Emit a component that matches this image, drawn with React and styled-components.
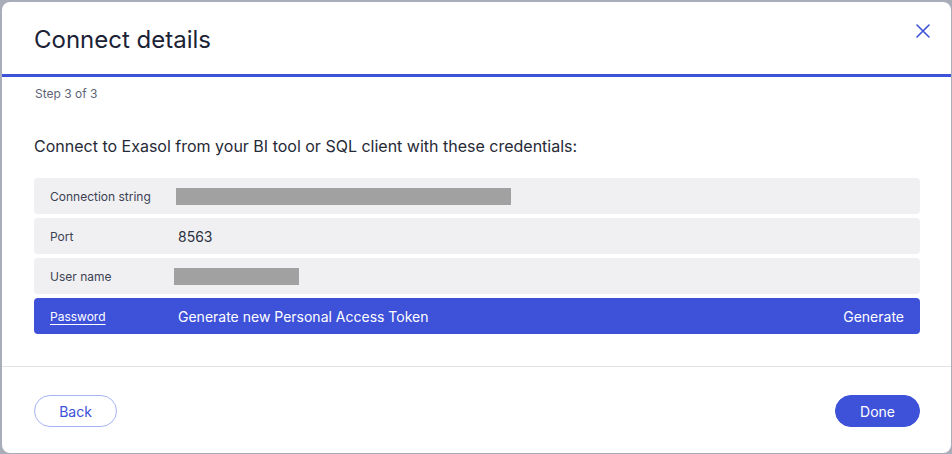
import React from "react";
import styled, { createGlobalStyle } from "styled-components";

const GlobalStyle = createGlobalStyle`
  html, body {
    margin: 0;
    padding: 0;
    background: #a9acb9;
    font-family: Inter, "Noto Sans", sans-serif;
    overflow: hidden;
  }
`;

const rows = [
  { label: "Connection string", masked: 335, shift: -2 },
  { label: "Port", value: "8563" },
  { label: "User name", masked: 125, shift: -4 },
];

function App() {
  return (
    <>
      <GlobalStyle />
      <Modal>
        <Header>
          <Title>Connect details</Title>
          <CloseButton aria-label="Close">
            <svg width="14" height="14" viewBox="0 0 14 14">
              <path d="M1 1L13 13M13 1L1 13" stroke="#3d51d9" strokeWidth="1.6" strokeLinecap="round" />
            </svg>
          </CloseButton>
        </Header>
        <Progress />
        <Step>Step 3 of 3</Step>
        <Body>
          <Intro>Connect to Exasol from your BI tool or SQL client with these credentials:</Intro>
          <List>
            {rows.map((r) => (
              <Row key={r.label}>
                <Label>{r.label}</Label>
                {r.masked ? (
                  <Mask $w={r.masked} $shift={r.shift || 0} />
                ) : (
                  <Value>{r.value}</Value>
                )}
              </Row>
            ))}
            <Row $active>
              <Label $link>Password</Label>
              <Value>Generate new Personal Access Token</Value>
              <Action>Generate</Action>
            </Row>
          </List>
        </Body>
        <Footer>
          <Button>Back</Button>
          <Button $primary>Done</Button>
        </Footer>
      </Modal>
    </>
  );
}

const Modal = styled.div`
  margin: 2px 1px 1px 2px;
  height: 451px;
  background: #fff;
  border-radius: 8px;
  display: flex;
  flex-direction: column;
  box-sizing: border-box;
  overflow: hidden;
`;

const Header = styled.div`
  display: flex;
  justify-content: space-between;
  align-items: flex-start;
  padding: 23px 21px 0 32px;
  height: 72px;
  box-sizing: border-box;
`;

const Title = styled.h1`
  margin: 0;
  font-size: 24px;
  font-weight: 400;
  line-height: 29px;
  color: #1b2236;
`;

const CloseButton = styled.button`
  border: none;
  background: none;
  padding: 0;
  margin-top: -1px;
  cursor: pointer;
  display: flex;
`;

const Progress = styled.div`
  height: 3px;
  background: #3d51d9;
`;

const Step = styled.div`
  padding: 9px 0 0 33px;
  font-size: 12px;
  line-height: 16px;
  color: #5d6477;
`;

const Body = styled.div`
  padding: 0 31px 0 32px;
  flex: 1;
  border-bottom: 1px solid #e3e3e7;
`;

const Intro = styled.p`
  margin: 34px 0 0 0;
  font-size: 16px;
  line-height: 20px;
  color: #262a36;
`;

const List = styled.div`
  margin-top: 22px;
  display: flex;
  flex-direction: column;
  gap: 4px;
`;

const Row = styled.div`
  display: flex;
  align-items: center;
  height: 36px;
  padding: 0 16px;
  border-radius: 4px;
  background: ${(p) => (p.$active ? "#3d51d9" : "#f0f0f2")};
  color: ${(p) => (p.$active ? "#fff" : "#2b3040")};
`;

const Label = styled.span`
  width: 128px;
  flex: none;
  font-size: 12px;
  color: ${(p) => (p.$link ? "#fff" : "#3c4254")};
  text-decoration: ${(p) => (p.$link ? "underline" : "none")};
  text-underline-offset: 3px;
`;

const Value = styled.span`
  flex: 1;
  font-size: 14px;
`;

const Mask = styled.span`
  width: ${(p) => p.$w}px;
  height: 17px;
  margin-left: ${(p) => p.$shift}px;
  background: #a1a1a1;
`;

const Action = styled.span`
  font-size: 14px;
`;

const Footer = styled.div`
  display: flex;
  justify-content: space-between;
  align-items: center;
  padding: 28px 31px 26px 32px;
`;

const Button = styled.button`
  height: 32px;
  min-width: ${(p) => (p.$primary ? "85px" : "83px")};
  padding: 0 20px;
  border-radius: 16px;
  font-family: inherit;
  font-size: 14px;
  border: 1px solid ${(p) => (p.$primary ? "#3d51d9" : "#a7b3f7")};
  background: ${(p) => (p.$primary ? "#3d51d9" : "#fff")};
  color: ${(p) => (p.$primary ? "#fff" : "#3d51d9")};
  cursor: pointer;
`;

export default App;
